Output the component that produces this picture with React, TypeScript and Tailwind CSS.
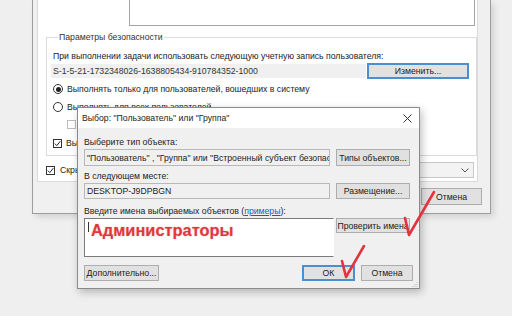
import React from 'react';

const ui = "font-['Liberation_Sans',Arial,sans-serif] text-[8.7px] leading-[12px] text-[#1b1b1b]";

function Btn(props: { children: React.ReactNode; className?: string; focused?: boolean }) {
  return (
    <div
      className={
        'flex items-center justify-center whitespace-nowrap bg-[#e1e1e1] ' +
        (props.focused ? 'border-2 border-[#4a8fd0] bg-[#dfe6ee] ' : 'border border-[#adadad] ') +
        (props.className ?? '')
      }
    >
      {props.children}
    </div>
  );
}

function Radio(props: { checked?: boolean }) {
  return (
    <div className="flex h-[10px] w-[10px] shrink-0 items-center justify-center rounded-full border border-[#333] bg-white">
      {props.checked && <div className="h-[5px] w-[5px] rounded-full bg-[#222]" />}
    </div>
  );
}

function Check(props: { checked?: boolean; disabled?: boolean }) {
  return (
    <div
      className={
        'flex h-[9px] w-[9px] shrink-0 items-center justify-center border bg-white ' +
        (props.disabled ? 'border-[#bcbcbc]' : 'border-[#333]')
      }
    >
      {props.checked && (
        <svg width="7" height="7" viewBox="0 0 7 7">
          <path d="M0.8 3.6 L2.8 5.6 L6.3 1.2" fill="none" stroke="#222" strokeWidth="1" />
        </svg>
      )}
    </div>
  );
}

function BackWindow() {
  return (
    <div className="ml-[32px] h-[214px] w-[459px] border-x border-b border-[#9d9d9d] bg-[#f0f0f0] shadow-[3px_3px_6px_rgba(0,0,0,0.12)]">
      <div className="ml-[4px] h-[182px] w-[441px] border-x border-b border-[#dadada] bg-white">
        <div className="ml-[91px] h-[26px] w-[346px] border-x border-b border-[#a5a5a5] bg-white" />

        <fieldset className="mt-[5px] ml-[8px] h-[125px] w-[431px] border border-[#dcdcdc] pl-[6px]">
          <legend className="ml-[5px] px-[1px] text-[#333]">Параметры безопасности</legend>
          <div className="mt-[7px]">
            При выполнении задачи использовать следующую учетную запись пользователя:
          </div>
          <div className="mt-[1px] flex h-[15px] items-center">
            <div className="-ml-[2px] flex h-[14px] w-[315px] items-center bg-[#f0f0f0] pl-[2px] text-[#333]">
              S-1-5-21-1732348026-1638805434-910784352-1000
            </div>
            <Btn focused className="ml-[1px] h-[16px] w-[102px]">
              Изменить...
            </Btn>
          </div>
          <div className="mt-[5px] flex h-[12px] items-center gap-[4px]">
            <Radio checked />
            <span>Выполнять только для пользователей, вошедших в систему</span>
          </div>
          <div className="mt-[6px] flex h-[12px] items-center gap-[4px]">
            <Radio />
            <span>Выполнять для всех пользователей</span>
          </div>
          <div className="mt-[5px] ml-[14px] flex h-[12px] items-center">
            <Check disabled />
          </div>
          <div className="mt-[7px] flex h-[12px] items-center gap-[4px]">
            <Check checked />
            <span>Выполнить с наивысшими правами</span>
          </div>
        </fieldset>

        <div className="mt-[6px] flex h-[16px] items-center pl-[8px]">
          <Check checked />
          <span className="ml-[5px]">Скрытая задача</span>
          <div className="ml-auto mr-[3px] flex h-[16px] w-[200px] items-center justify-end border border-[#c8c8c8] bg-[#f3f3f3] pr-[4px]">
            <svg width="8" height="5" viewBox="0 0 8 5">
              <path d="M0.5 0.5 L4 4 L7.5 0.5" fill="none" stroke="#555" strokeWidth="1" />
            </svg>
          </div>
        </div>
      </div>

      <div className="mt-[6px] flex justify-end gap-[8px] pr-[8px]">
        <Btn className="h-[17px] w-[61px]">ОК</Btn>
        <Btn className="h-[17px] w-[61px]">Отмена</Btn>
      </div>
    </div>
  );
}

function Dialog() {
  return (
    <div className="absolute left-[77px] top-[107px] flex h-[182px] w-[343px] flex-col border border-[#8a8a8a] bg-[#f0f0f0] shadow-[2px_3px_8px_rgba(0,0,0,0.25)]">
      <div className="flex h-[20px] items-center justify-between bg-white pl-[4px] pr-[7px]">
        <span>Выбор: "Пользователь" или "Группа"</span>
        <svg width="9" height="9" viewBox="0 0 9 9">
          <path d="M0.5 0.5 L8.5 8.5 M8.5 0.5 L0.5 8.5" stroke="#333" strokeWidth="1" />
        </svg>
      </div>

      <div className="relative flex flex-1 flex-col px-[6px]">
        <div className="mt-[8px] h-[12px]">Выберите тип объекта:</div>
        <div className="mt-[1px] flex h-[17px] gap-[6px]">
          <div className="flex w-[246px] items-center overflow-hidden whitespace-nowrap border border-[#b8b8b8] bg-[#f0f0f0] pl-[2px]">
            "Пользователь" , "Группа" или "Встроенный субъект безопасности"
          </div>
          <Btn className="w-[74px]">Типы объектов...</Btn>
        </div>

        <div className="mt-[4px] h-[12px]">В следующем месте:</div>
        <div className="mt-[1px] flex h-[16px] gap-[6px]">
          <div className="flex w-[246px] items-center border border-[#b8b8b8] bg-[#f0f0f0] pl-[2px]">
            DESKTOP-J9DPBGN
          </div>
          <Btn className="w-[74px]">Размещение...</Btn>
        </div>

        <div className="mt-[6px] h-[12px]">
          Введите имена выбираемых объектов (<span className="text-[#0b62c4] underline">примеры</span>):
        </div>
        <div className="mt-[1px] flex gap-[2px]">
          <div className="flex h-[39px] w-[250px] items-start border border-[#7a7a7a] border-r-transparent bg-white pl-[3px] pt-[2px]">
            <div className="mt-[1px] h-[10px] w-[1px] bg-[#333]" />
            <span className="ml-[2px] font-['Liberation_Sans',Arial,sans-serif] text-[16.4px] font-bold leading-[18px] text-[#e0373f] [text-shadow:0_0_2px_rgba(224,55,63,0.35)]">
              Администраторы
            </span>
          </div>
          <Btn className="h-[15px] w-[74px]">Проверить имена</Btn>
        </div>

        <div className="mt-[8px] flex h-[16px]">
          <Btn className="w-[75px]">Дополнительно...</Btn>
          <Btn focused className="ml-auto w-[53px]">
            ОК
          </Btn>
          <Btn className="ml-[6px] w-[52px]">Отмена</Btn>
        </div>

        <svg className="absolute bottom-[1px] right-[1px]" width="6" height="6" viewBox="0 0 6 6">
          <path d="M5 1 V1.8 M3 3 V3.8 M5 3 V3.8 M1 5 V5.8 M3 5 V5.8 M5 5 V5.8" stroke="#aaa" strokeWidth="1" />
        </svg>
      </div>
    </div>
  );
}

export default function App() {
  return (
    <div className={'relative h-[316px] w-[512px] overflow-hidden bg-[#efefef] ' + ui}>
      <BackWindow />
      <Dialog />
      <svg className="pointer-events-none absolute left-0 top-0" width="512" height="316" viewBox="0 0 512 316">
        <path
          d="M405 218 L409 235 L434 192"
          fill="none"
          stroke="#e2343f"
          strokeWidth="2.6"
          strokeLinecap="round"
          strokeLinejoin="round"
        />
        <path
          d="M342 261 L346 277 L364 246"
          fill="none"
          stroke="#e2343f"
          strokeWidth="2.6"
          strokeLinecap="round"
          strokeLinejoin="round"
        />
      </svg>
    </div>
  );
}
